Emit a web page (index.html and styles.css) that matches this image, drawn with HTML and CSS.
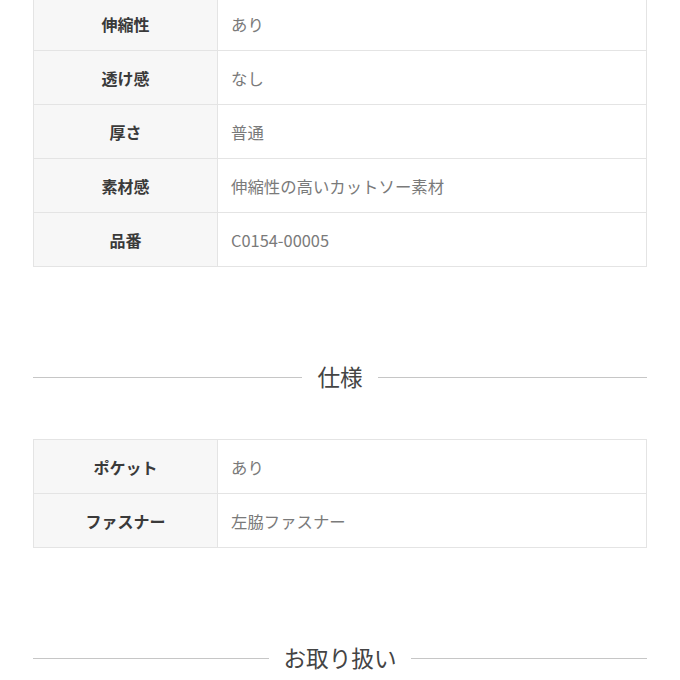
FILE: index.html
```html
<!DOCTYPE html>
<html lang="ja">
<head>
<meta charset="utf-8">
<link rel="stylesheet" href="styles.css">
</head>
<body>
<div class="page">
  <div class="spec spec-first">
    <div class="row"><div class="label">伸縮性</div><div class="value">あり</div></div>
    <div class="row"><div class="label">透け感</div><div class="value">なし</div></div>
    <div class="row"><div class="label">厚さ</div><div class="value">普通</div></div>
    <div class="row"><div class="label">素材感</div><div class="value">伸縮性の高いカットソー素材</div></div>
    <div class="row"><div class="label">品番</div><div class="value">C0154-00005</div></div>
  </div>

  <h2 class="heading"><span>仕様</span></h2>

  <div class="spec">
    <div class="row"><div class="label">ポケット</div><div class="value">あり</div></div>
    <div class="row"><div class="label">ファスナー</div><div class="value">左脇ファスナー</div></div>
  </div>

  <h2 class="heading"><span>お取り扱い</span></h2>
</div>
</body>
</html>
```
FILE: styles.css
```css
html, body {
  margin: 0;
  padding: 0;
  background: #fff;
}
body {
  font-family: "Noto Sans CJK JP", "Noto Sans", sans-serif;
  overflow: hidden;
}
.page {
  padding: 0 33px;
}
.spec {
  border: 1px solid #e4e4e4;
}
.spec-first {
  margin-top: -4px;
}
.row {
  display: grid;
  grid-template-columns: 184px 1fr;
  height: 53px;
}
.row + .row {
  border-top: 1px solid #e4e4e4;
}
.label {
  background: #f7f7f7;
  border-right: 1px solid #e4e4e4;
  display: flex;
  align-items: center;
  justify-content: center;
  font-size: 16px;
  font-weight: 700;
  color: #3a3a3a;
}
.value {
  display: flex;
  align-items: center;
  padding-left: 13px;
  font-size: 16.4px;
  color: #7a7a7a;
}
.heading {
  display: flex;
  align-items: center;
  gap: 15px;
  margin: 94px 0 46px;
  height: 32px;
  font-size: 22.6px;
  font-weight: 400;
  color: #444;
  line-height: 32px;
}
.heading::before,
.heading::after {
  content: "";
  flex: 1;
  height: 1px;
  background: #c6c6c6;
}
```
